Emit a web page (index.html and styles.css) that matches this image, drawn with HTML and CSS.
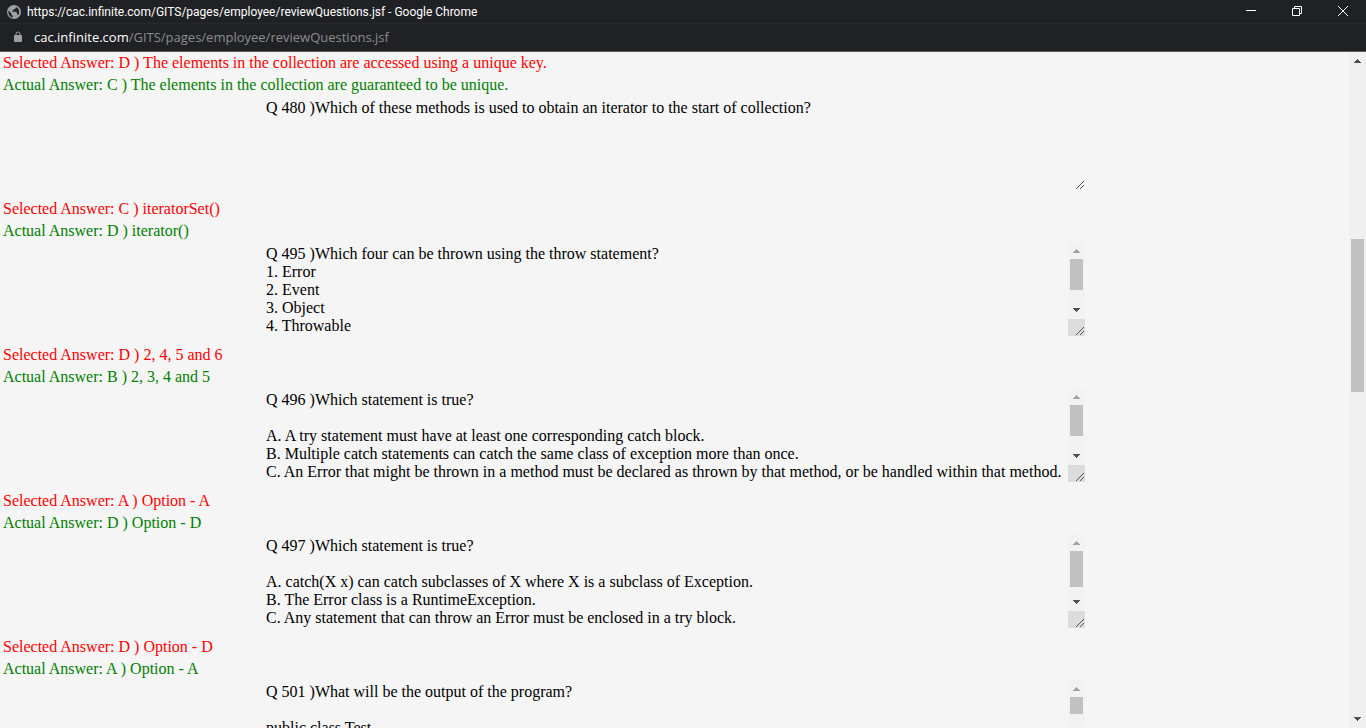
FILE: index.html
```html
<!DOCTYPE html>
<html lang="en">
<head>
<meta charset="utf-8">
<meta name="viewport" content="width=device-width, initial-scale=1">
<title>https://cac.infinite.com/GITS/pages/employee/reviewQuestions.jsf</title>
<link rel="stylesheet" href="styles.css">
</head>
<body>
<svg class="sprite" aria-hidden="true">
  <symbol id="up" viewBox="0 0 17 17"><path d="M8 7h1v1h1v1h1v1h1v1H5v-1h1V9h1V8h1z"/></symbol>
  <symbol id="down" viewBox="0 0 17 17"><path d="M5 6h7v1h-1v1h-1v1H9v1H8V9H7V8H6V7H5z"/></symbol>
  <symbol id="grip" viewBox="0 0 17 17"><path d="M8 16l8-8M12 16l4-4" stroke="#505050" fill="none"/></symbol>
</svg>
<header class="chrome">
  <div class="titlebar">
    <svg class="globe" viewBox="0 0 14 14" aria-hidden="true"><circle cx="7" cy="7" r="7" fill="#9aa0a6"/><path d="M1.4 5.5l3 3v1.2l1.3 1v1.8C2.8 12 .9 9 1.4 5.500zM9.200 1.900v.9L8 4H6.600v1.500H5.200v1.300h4l1 1.600v1.300h1.300c1.500-2.400.6-6.400-2.300-7.800z" fill="#202124"/></svg>
    <span class="title">https://cac.infinite.com/GITS/pages/employee/reviewQuestions.jsf - Google Chrome</span>
    <div class="controls">
      <button type="button" aria-label="Minimize"><svg viewBox="0 0 12 12"><path d="M1 5.500h10"/></svg></button>
      <button type="button" aria-label="Restore"><svg viewBox="0 0 12 12"><path d="M1.500 3.500h7v7h-7zM3.500 3V1.500h7v7H9"/></svg></button>
      <button type="button" aria-label="Close"><svg viewBox="0 0 12 12"><path d="M1 1l10 10M11 1L1 11"/></svg></button>
    </div>
  </div>
  <div class="address">
    <svg class="lock" viewBox="0 0 8 12" aria-hidden="true"><rect y="4" width="8" height="7" rx="1" fill="#9aa0a6"/><path d="M2 5V3a2 2 0 0 1 4 0v2" fill="none" stroke="#9aa0a6"/></svg>
    <span class="url"><span class="host">cac.infinite.com</span>/GITS/pages/employee/reviewQuestions.jsf</span>
  </div>
</header>
<div class="viewport">
  <main class="page">
    <div class="answers">
      <p class="selected">Selected Answer: D ) The elements in the collection are accessed using a unique key.</p>
      <p class="actual">Actual Answer: C ) The elements in the collection are guaranteed to be unique.</p>
    </div>
    <div class="question">
      <textarea rows="5" readonly aria-label="Question 480">Q 480 )Which of these methods is used to obtain an iterator to the start of collection?</textarea>
      <div class="side"><div class="bar plain"></div><svg class="grip"><use href="#grip"/></svg></div>
    </div>
    <div class="answers">
      <p class="selected">Selected Answer: C ) iteratorSet()</p>
      <p class="actual">Actual Answer: D ) iterator()</p>
    </div>
    <div class="question">
      <textarea rows="5" readonly aria-label="Question 495">Q 495 )Which four can be thrown using the throw statement?
1. Error
2. Event
3. Object
4. Throwable</textarea>
      <div class="side"><div class="bar"><svg class="arrow off"><use href="#up"/></svg><div class="track"><div class="thumb" style="height:72%"></div></div><svg class="arrow"><use href="#down"/></svg></div><svg class="grip filled"><use href="#grip"/></svg></div>
    </div>
    <div class="answers">
      <p class="selected">Selected Answer: D ) 2, 4, 5 and 6</p>
      <p class="actual">Actual Answer: B ) 2, 3, 4 and 5</p>
    </div>
    <div class="question">
      <textarea rows="5" readonly aria-label="Question 496">Q 496 )Which statement is true?

A. A try statement must have at least one corresponding catch block.
B. Multiple catch statements can catch the same class of exception more than once.
C. An Error that might be thrown in a method must be declared as thrown by that method, or be handled within that method.</textarea>
      <div class="side"><div class="bar"><svg class="arrow off"><use href="#up"/></svg><div class="track"><div class="thumb" style="height:72%"></div></div><svg class="arrow"><use href="#down"/></svg></div><svg class="grip filled"><use href="#grip"/></svg></div>
    </div>
    <div class="answers">
      <p class="selected">Selected Answer: A ) Option - A</p>
      <p class="actual">Actual Answer: D ) Option - D</p>
    </div>
    <div class="question">
      <textarea rows="5" readonly aria-label="Question 497">Q 497 )Which statement is true?

A. catch(X x) can catch subclasses of X where X is a subclass of Exception.
B. The Error class is a RuntimeException.
C. Any statement that can throw an Error must be enclosed in a try block.</textarea>
      <div class="side"><div class="bar"><svg class="arrow off"><use href="#up"/></svg><div class="track"><div class="thumb" style="height:84%"></div></div><svg class="arrow"><use href="#down"/></svg></div><svg class="grip filled"><use href="#grip"/></svg></div>
    </div>
    <div class="answers">
      <p class="selected">Selected Answer: D ) Option - D</p>
      <p class="actual">Actual Answer: A ) Option - A</p>
    </div>
    <div class="question">
      <textarea rows="5" readonly aria-label="Question 501">Q 501 )What will be the output of the program?

public class Test</textarea>
      <div class="side"><div class="bar"><svg class="arrow off"><use href="#up"/></svg><div class="track"><div class="thumb" style="height:40%"></div></div><svg class="arrow"><use href="#down"/></svg></div><svg class="grip filled"><use href="#grip"/></svg></div>
    </div>
  </main>
  <div class="scrollbar">
    <svg class="arrow"><use href="#up"/></svg>
    <div class="track"><div class="before" style="height:26.5%"></div><div class="thumb" style="height:23.8%"></div></div>
    <svg class="arrow"><use href="#down"/></svg>
  </div>
</div>
</body>
</html>
```
FILE: styles.css
```css
* { box-sizing: border-box; }
body {
  margin: 0;
  height: 100vh;
  display: flex;
  flex-direction: column;
  overflow: hidden;
  background: #f5f5f5;
  color: #000;
  font: 16px/18px "Liberation Serif", "Times New Roman", serif;
}
svg { display: block; flex: none; }
.sprite { width: 0; height: 0; position: absolute; }

.chrome {
  flex: none;
  background: #202124;
  border-bottom: 1px solid #5a5b5d;
  font-family: Roboto, "Noto Sans", sans-serif;
  white-space: nowrap;
}
.titlebar {
  display: flex;
  align-items: center;
  height: 24px;
  padding-left: 7px;
  gap: 6px;
  border-bottom: 1px solid #27282b;
  color: #fff;
  font-size: 12px;
}
.globe { width: 14px; height: 14px; }
.title { flex: 1; overflow: hidden; }
.controls { display: flex; }
.controls button {
  width: 46px;
  height: 22px;
  padding: 0 0 2px;
  border: 0;
  background: none;
  display: flex;
  align-items: center;
  justify-content: center;
}
.controls svg { width: 12px; height: 12px; fill: none; stroke: #fff; }
.address {
  display: flex;
  align-items: center;
  height: 27px;
  padding: 0 0 1px 14px;
  gap: 12px;
  color: #8b8d90;
  font-family: "Open Sans", "Noto Sans", sans-serif;
  font-size: 13px;
}
.lock { width: 8px; height: 12px; }
.host { color: #fff; }

.viewport { flex: 1; min-height: 0; display: flex; }
.page { flex: 1; min-width: 0; overflow: hidden; }
.answers { padding: 0 3px; line-height: 22px; }
.answers p { margin: 0; }
.question + .answers { padding-top: 8px; }
.selected { color: #f00; }
.actual { color: #008000; }

.question {
  display: flex;
  width: 821px;
  max-width: 100%;
  margin: 0 auto;
}
.question textarea {
  flex: 1;
  min-width: 0;
  display: block;
  margin: 0;
  padding: 3px 2px 1px;
  border: 0;
  outline: 0;
  resize: none;
  overflow: hidden;
  background: transparent;
  color: inherit;
  font: inherit;
}
.side { width: 17px; display: flex; flex-direction: column; }
.bar { flex: 1; display: flex; flex-direction: column; background: #f2f2f2; }
.plain { background: none; }
.arrow { width: 17px; height: 17px; fill: #505050; }
.off { fill: #a3a3a3; }
.track { flex: 1; padding: 0 2px; }
.thumb { background: #c1c1c1; }
.grip { width: 17px; height: 17px; }
.filled { background: #dcdcdc; }
.scrollbar { width: 17px; display: flex; flex-direction: column; background: #f0f0f0; }
```
